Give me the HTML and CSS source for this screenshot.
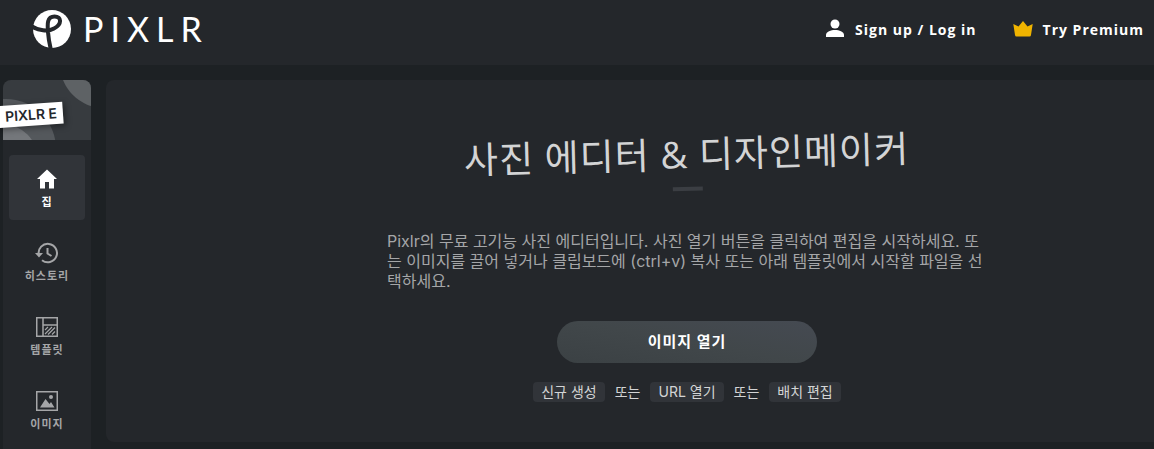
FILE: index.html
```html
<!DOCTYPE html>
<html lang="ko">
<head>
    <meta charset="UTF-8">
    <meta name="viewport" content="width=device-width, initial-scale=1.0">
    <title>Pixlr E</title>
    <link rel="stylesheet" href="styles.css">
</head>
<body>
    <header class="header">
        <a class="logo" href="#">
            <svg class="logo-mark" viewBox="0 0 38 38">
                <circle cx="19" cy="19" r="19" fill="#fff"/>
                <path d="M-1 16.500C5 20.500 15 22 21 18.500C29 14.500 29 6.500 21.500 6.500C13.500 6.500 14.500 15 15 22C15.500 29 16.500 34 18 40" fill="none" stroke="#24272b" stroke-width="4"/>
            </svg>
            <span class="logo-text">PIXLR</span>
        </a>
        <nav class="account">
            <a href="#">
                <svg width="20" height="20" viewBox="0 0 20 20" fill="#fff">
                    <circle cx="10" cy="5" r="4.500"/>
                    <path d="M1 18v-2c0-3.300 5-5 9-5s9 1.700 9 5v2z"/>
                </svg>
                Sign up / Log in
            </a>
            <a href="#">
                <svg width="20" height="20" viewBox="0 0 20 20" fill="#f0b400">
                    <path d="M0.300 5L5.500 7.500 10 2l4.500 5.500L19.700 5 18 16q-.2 1.500-1.500 1.500h-13Q2.200 17.500 2 16z"/>
                </svg>
                Try Premium
            </a>
        </nav>
    </header>

    <div class="workspace">
        <aside class="sidebar">
            <div class="product">
                <svg class="product-art" viewBox="0 0 88 60" preserveAspectRatio="none">
                    <rect width="88" height="60" fill="#373b3f"/>
                    <circle cx="3" cy="69" r="50" fill="#54585c"/>
                    <circle cx="-1" cy="80" r="36" fill="#74777b"/>
                    <circle cx="101" cy="-16" r="44" fill="#5e6265"/>
                </svg>
                <span class="product-name">PIXLR E</span>
            </div>
            <nav class="menu">
                <a class="menu-item active" href="#">
                    <svg width="24" height="24" viewBox="0 0 24 24" fill="currentColor">
                        <path d="M12 2.500L22 12h-3v9.500h-5V15h-4v6.500H5V12H2z"/>
                    </svg>
                    집
                </a>
                <a class="menu-item" href="#">
                    <svg width="24" height="24" viewBox="0 0 24 24" fill="none" stroke="currentColor" stroke-width="2">
                        <path d="M3.700 13.500A9.200 9.200 0 1 1 7 19.200M12.500 7v5.500l4 2.500"/>
                        <path d="M0 12h8l-4 4.500z" fill="currentColor" stroke="none"/>
                    </svg>
                    히스토리
                </a>
                <a class="menu-item" href="#">
                    <svg width="24" height="24" viewBox="0 0 24 24" fill="none" stroke="currentColor" stroke-width="1.500">
                        <rect x="1.750" y="2.750" width="20.500" height="18.500"/>
                        <path d="M8 3v18M8 10h14"/>
                        <path d="M10 15l3-3M10 19l7-7M13 19.500l7-7M17 19.500l3-3" stroke-width="1.200"/>
                    </svg>
                    템플릿
                </a>
                <a class="menu-item" href="#">
                    <svg width="24" height="24" viewBox="0 0 24 24" fill="currentColor">
                        <rect x="1.750" y="2.750" width="20.500" height="18.500" fill="none" stroke="currentColor" stroke-width="1.500"/>
                        <path d="M5 18.500l5.500-8.500 4 5 1.500-2 3.500 5.500z"/>
                        <circle cx="16" cy="8" r="2"/>
                    </svg>
                    이미지
                </a>
            </nav>
        </aside>

        <main class="hero">
            <div class="hero-content">
                <h1>사진 에디터 &amp; 디자인메이커</h1>
                <p class="intro">Pixlr의 무료 고기능 사진 에디터입니다. 사진 열기 버튼을 클릭하여 편집을 시작하세요. 또는 이미지를 끌어 넣거나 클립보드에 (ctrl+v) 복사 또는 아래 템플릿에서 시작할 파일을 선택하세요.</p>
                <button class="open-button" type="button">이미지 열기</button>
                <div class="options">
                    <button type="button">신규 생성</button>
                    <span>또는</span>
                    <button type="button">URL 열기</button>
                    <span>또는</span>
                    <button type="button">배치 편집</button>
                </div>
            </div>
        </main>
    </div>
</body>
</html>
```

FILE: styles.css
```css
* { box-sizing: border-box; }
body {
    margin: 0;
    background: #1d2124;
    color: #fff;
    font-family: Inter, "Noto Sans CJK KR", sans-serif;
    font-size: 14px;
    overflow-x: hidden;
}
a {
    color: inherit;
    text-decoration: none;
}
button {
    border: none;
    font-family: inherit;
    cursor: pointer;
}
svg { display: block; }
.header {
    display: flex;
    justify-content: space-between;
    height: 65px;
    padding: 10px 10px 0 33px;
    background: #24272b;
}
.logo {
    display: flex;
    align-items: center;
    gap: 12px;
    height: 38px;
}
.logo-mark {
    width: 38px;
    height: 38px;
}
.logo-text {
    font-family: Lato, sans-serif;
    font-size: 34px;
    line-height: 38px;
    letter-spacing: 7px;
}
.account {
    display: flex;
    gap: 36px;
    height: 38px;
}
.account a {
    display: flex;
    align-items: center;
    gap: 10px;
    font-family: "Open Sans", sans-serif;
    font-weight: 700;
    letter-spacing: 1px;
    white-space: nowrap;
}
.workspace {
    display: flex;
    align-items: flex-start;
    gap: 15px;
    padding: 15px 0 0 3px;
}
.sidebar {
    flex: 0 0 88px;
    min-height: calc(100vh - 80px);
    background: #24272b;
    border-radius: 8px 8px 0 0;
}
.product {
    position: relative;
    height: 60px;
}
.product-art {
    width: 100%;
    height: 100%;
    border-radius: 8px 8px 0 0;
}
.product-name {
    position: absolute;
    left: -8px;
    top: 24px;
    padding: 0 6px 0 10px;
    background: #fff;
    color: #24272b;
    font-weight: 600;
    line-height: 22px;
    white-space: nowrap;
    transform: rotate(-4deg);
    box-shadow: 2px 2px 6px rgba(0, 0, 0, 0.4);
}
.menu {
    display: flex;
    flex-direction: column;
    gap: 9px;
    padding: 15px 6px 0;
}
.menu-item {
    display: flex;
    flex-direction: column;
    align-items: center;
    gap: 3px;
    height: 65px;
    padding-top: 12px;
    border-radius: 4px;
    color: #a5a6a8;
    font-size: 11px;
    font-weight: 700;
    line-height: 16px;
    letter-spacing: 1px;
}
.menu-item.active {
    background: #313439;
    color: #fff;
}
.hero {
    flex: 1;
    min-width: 0;
    padding: 44px 0 40px 114px;
    background: #24272b;
    border-radius: 8px 0 0 8px;
}
.hero-content {
    display: flex;
    flex-direction: column;
    align-items: center;
    max-width: 600px;
    margin: 0 auto;
}
h1 {
    margin: 0 0 40px;
    color: #d3d4d5;
    font-family: "Open Sans", "Noto Sans CJK KR", sans-serif;
    font-size: 37px;
    font-weight: 400;
    line-height: 60px;
    letter-spacing: 1px;
    white-space: nowrap;
    transform: rotate(-1.5deg);
}
h1::after {
    content: "";
    display: block;
    width: 30px;
    height: 4px;
    margin: 3px auto 0;
    background: #3b3e43;
}
.intro {
    width: 100%;
    margin: 0 0 30px;
    color: #a5a6a8;
    font-size: 16px;
    line-height: 20px;
}
.open-button {
    width: 260px;
    height: 42px;
    padding: 0 0 3px;
    border-radius: 21px;
    background: linear-gradient(10deg, #3b4144, #41474a 50%, #454a52);
    color: #fff;
    font-size: 15px;
    font-weight: 700;
    letter-spacing: 1px;
}
.options {
    display: flex;
    gap: 10px;
    margin-top: 19px;
    color: #d3d4d5;
    line-height: 20px;
}
.options button {
    padding: 0 8px;
    border-radius: 4px;
    background: #313439;
    color: inherit;
    font-size: 14px;
    line-height: 20px;
}
```
